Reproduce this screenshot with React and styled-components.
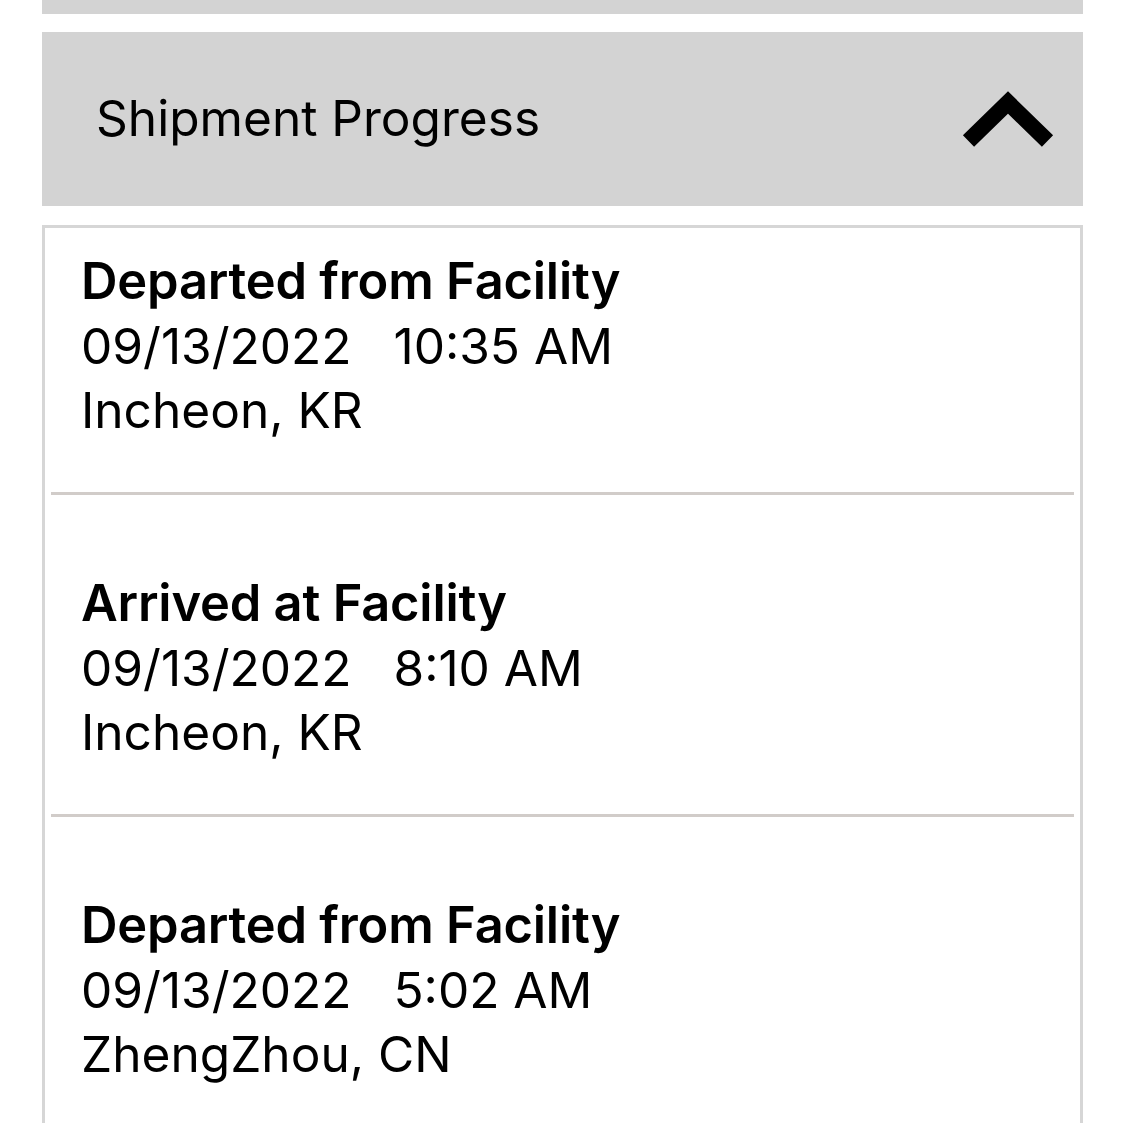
import React from "react";
import styled, { createGlobalStyle } from "styled-components";

const Global = createGlobalStyle`
  html, body { margin: 0; padding: 0; background: #ffffff; }
  body { font-family: Inter, "Liberation Sans", Arial, sans-serif; color: #000; }
`;

const Page = styled.div`
  width: 1041px;
  margin-left: 42px;
  display: flex;
  flex-direction: column;
`;

const TopBar = styled.div`
  height: 14px;
  background: #d3d3d3;
`;

const Header = styled.div`
  margin-top: 18px;
  height: 174px;
  background: #d3d3d3;
  display: flex;
  align-items: center;
  justify-content: space-between;
  padding: 0 26px 0 54px;
  box-sizing: border-box;
`;

const HeaderTitle = styled.h2`
  margin: 0;
  font-family: Inter, "Liberation Sans", Arial, sans-serif;
  font-weight: 400;
  font-size: 49.6px;
  line-height: 1;
  color: #000;
`;

const Card = styled.div`
  margin-top: 19px;
  border: 3px solid #d6d6d6;
  border-bottom: none;
  display: flex;
  flex-direction: column;
`;

const Item = styled.div`
  padding: ${(p) => (p.$first ? "19px" : "74px")} 36px 50px;
  display: flex;
  flex-direction: column;
`;

const Title = styled.div`
  font-size: 50.6px;
  font-weight: 600;
  line-height: 67px;
  letter-spacing: -0.2px;
`;

const Line = styled.div`
  font-size: 49.6px;
  font-weight: 400;
  line-height: 64px;
  white-space: pre;
`;

const Divider = styled.div`
  height: 3px;
  margin: 0 6px;
  background: #d1ccc9;
`;

const Chevron = () => (
  <svg width="96" height="70" viewBox="0 0 96 70" aria-hidden="true">
    <polyline
      points="7.5,57 47,18.5 86.5,57"
      fill="none"
      stroke="#000"
      strokeWidth="16"
      strokeLinecap="butt"
      strokeLinejoin="miter"
    />
  </svg>
);

const events = [
  { title: "Departed from Facility", date: "09/13/2022", time: "10:35 AM", place: "Incheon, KR" },
  { title: "Arrived at Facility", date: "09/13/2022", time: "8:10 AM", place: "Incheon, KR" },
  { title: "Departed from Facility", date: "09/13/2022", time: "5:02 AM", place: "ZhengZhou, CN" },
];

export default function App() {
  return (
    <>
      <Global />
      <Page>
        <TopBar />
        <Header>
          <HeaderTitle>Shipment Progress</HeaderTitle>
          <Chevron />
        </Header>
        <Card>
          {events.map((e, i) => (
            <React.Fragment key={i}>
              {i > 0 && <Divider />}
              <Item $first={i === 0}>
                <Title>{e.title}</Title>
                <Line>{`${e.date}   ${e.time}`}</Line>
                <Line>{e.place}</Line>
              </Item>
            </React.Fragment>
          ))}
        </Card>
      </Page>
    </>
  );
}
